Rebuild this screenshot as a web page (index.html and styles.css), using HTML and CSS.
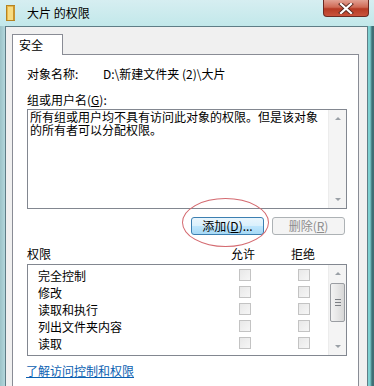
FILE: index.html
```html
<!DOCTYPE html>
<html>
  <head>
    <meta charset="UTF-8">
    <title>大片 的权限</title>
    <link rel="stylesheet" href="styles.css">
  </head>
  <body>
    <div id="window">
      <div id="titlebar">
        <svg class="folder" width="10" height="16" viewBox="0 0 10 16">
          <rect x="0.5" y="0.5" width="8" height="15" fill="#e9b94a" stroke="#b58422"/>
          <rect x="2" y="2" width="6" height="13" fill="#f7dc83"/>
          <rect x="7" y="1" width="2" height="14" fill="#c99530"/>
        </svg>
        <span class="title">大片 的权限</span>
        <div class="close">
          <svg width="16" height="11" viewBox="0 0 16 11">
            <path d="M3 1 L13 10 M13 1 L3 10" stroke="#5a2a22" stroke-width="4" stroke-linecap="square"/>
            <path d="M3 1 L13 10 M13 1 L3 10" stroke="#fff" stroke-width="2.2" stroke-linecap="square"/>
          </svg>
        </div>
      </div>
      <div id="client">
        <div class="tabs">
          <div class="tab">安全</div>
        </div>
        <div class="page">
          <div class="objrow">
            <span class="objlabel">对象名称:</span>
            <span>D:\新建文件夹 (2)\大片</span>
          </div>
          <div class="grouplabel">组或用户名(<u>G</u>):</div>
          <div class="listbox">
            <div class="listtext">所有组或用户均不具有访问此对象的权限。但是该对象<br>的所有者可以分配权限。</div>
            <div class="vscroll">
              <span class="arrow up"></span>
              <span class="track"></span>
              <span class="arrow down"></span>
            </div>
          </div>
          <div class="buttons">
            <button class="btn hot">添加(<u>D</u>)...</button>
            <button class="btn off">删除(<u>R</u>)</button>
            <div class="ring"></div>
          </div>
          <div class="permhead">
            <span class="permname">权限</span>
            <span class="colhead">允许</span>
            <span class="colhead">拒绝</span>
          </div>
          <div class="permlist">
            <div class="rows">
              <div class="row"><span class="permname">完全控制</span><span class="chk"></span><span class="chk"></span></div>
              <div class="row"><span class="permname">修改</span><span class="chk"></span><span class="chk"></span></div>
              <div class="row"><span class="permname">读取和执行</span><span class="chk"></span><span class="chk"></span></div>
              <div class="row"><span class="permname">列出文件夹内容</span><span class="chk"></span><span class="chk"></span></div>
              <div class="row"><span class="permname">读取</span><span class="chk"></span><span class="chk"></span></div>
            </div>
            <div class="vscroll">
              <span class="arrow up"></span>
              <span class="gap1"></span>
              <span class="thumb"><i></i><i></i><i></i></span>
              <span class="track"></span>
              <span class="arrow down"></span>
            </div>
          </div>
          <a class="help" href="#">了解访问控制和权限</a>
        </div>
      </div>
    </div>
  </body>
</html>
```

FILE: styles.css
```css
html,
body {
  margin: 0;
  padding: 0;
  width: 374px;
  height: 386px;
  overflow: hidden;
  font-family: "Noto Sans CJK SC", "Liberation Sans", sans-serif;
  font-size: 12px;
  color: #000;
}

#window {
  width: 374px;
  height: 386px;
  background: linear-gradient(90deg, #9cc3c8 0px, #bfe3e8 8px, #c6ecee 180px, #9fdcdc 300px, #7dd0d1 370px, #3f6f75 372px);
  display: flex;
  flex-direction: column;
}

#titlebar {
  height: 26px;
  display: flex;
  align-items: flex-start;
  background: linear-gradient(180deg, #d6eef1 0%, #c2e8ea 100%);
}

.folder {
  margin: 5px 0 0 6px;
}

.title {
  margin: 4px 0 0 11px;
  line-height: 18px;
}

.close {
  margin-left: auto;
  margin-right: 5px;
  width: 46px;
  height: 17px;
  box-sizing: border-box;
  border: 1px solid #6b2a22;
  border-top: none;
  border-radius: 0 0 4px 4px;
  background: linear-gradient(180deg, #e2a193 0%, #cf6a55 45%, #b63a24 55%, #c9543d 100%);
  display: flex;
  align-items: center;
  justify-content: center;
}

#client {
  margin-left: 5px;
  width: 363px;
  flex: 1;
  box-sizing: border-box;
  border: 1px solid #5f7d86;
  border-bottom: none;
  background: #f0f0f0;
  padding: 7px 0 0 6px;
  display: flex;
  flex-direction: column;
}

.tabs {
  display: flex;
  height: 20px;
}

.tab {
  width: 51px;
  box-sizing: border-box;
  border: 1px solid #898c95;
  border-bottom: none;
  background: #fff;
  line-height: 19px;
  padding-left: 6px;
  margin-bottom: -1px;
  position: relative;
  z-index: 1;
}

.page {
  width: 347px;
  flex: 1;
  box-sizing: border-box;
  border: 1px solid #898c95;
  border-bottom: none;
  background: #fff;
  padding: 11px 0 0 14px;
  position: relative;
}

.objrow {
  display: flex;
  line-height: 16px;
}

.objlabel {
  width: 76px;
}

.grouplabel {
  margin-top: 10px;
  line-height: 16px;
}

u {
  text-decoration: underline;
}

.listbox {
  margin-top: 1px;
  width: 320px;
  height: 100px;
  box-sizing: border-box;
  border: 1px solid #828790;
  display: flex;
}

.listtext {
  flex: 1;
  padding: 0 0 0 2px;
  line-height: 13px;
  white-space: nowrap;
}

.vscroll {
  width: 17px;
  display: flex;
  flex-direction: column;
  background: #f4f4f4;
  border-left: 1px solid #ececec;
}

.arrow {
  height: 17px;
  position: relative;
}

.arrow::after {
  content: "";
  position: absolute;
  left: 6px;
  width: 0;
  height: 0;
  border-left: 3px solid transparent;
  border-right: 3px solid transparent;
}

.arrow.up::after {
  top: 7px;
  border-bottom: 3px solid #9aa0a6;
}

.arrow.down::after {
  top: 7px;
  border-top: 3px solid #9aa0a6;
}

.track {
  flex: 1;
}

.gap1 {
  height: 1px;
}

.thumb {
  height: 39px;
  margin: 0 1px;
  box-sizing: border-box;
  border: 1px solid #9a9da2;
  border-radius: 2px;
  background: linear-gradient(90deg, #f3f3f3 0%, #e6e6e6 50%, #d7d7d7 100%);
  display: flex;
  flex-direction: column;
  align-items: center;
  justify-content: center;
  gap: 2px;
}

.thumb i {
  display: block;
  width: 6px;
  height: 1px;
  background: #7c7f84;
}

.buttons {
  margin-top: 8px;
  display: flex;
  padding-left: 164px;
  gap: 8px;
  position: relative;
}

.btn {
  width: 73px;
  height: 18px;
  box-sizing: border-box;
  font-family: "Noto Sans CJK SC", "Liberation Sans", sans-serif;
  font-size: 12px;
  line-height: 14px;
  padding: 0;
  border-radius: 3px;
}

.btn.hot {
  border: 1px solid #3c7fb1;
  background: linear-gradient(180deg, #eaf6fd 0%, #d9f0fc 50%, #bee6fd 51%, #a7d9f5 100%);
  color: #000;
}

.btn.off {
  border: 1px solid #adb2b5;
  background: #f4f4f4;
  color: #8d8d8d;
}

.ring {
  position: absolute;
  left: 155px;
  top: -19px;
  width: 87px;
  height: 49px;
  box-sizing: border-box;
  border: 1px solid #d46a70;
  border-radius: 50%;
  pointer-events: none;
}

.permhead {
  margin-top: 11px;
  display: flex;
  line-height: 16px;
  width: 320px;
}

.permhead .permname {
  width: 204px;
}

.colhead {
  width: 24px;
}

.colhead + .colhead {
  margin-left: 36px;
}

.permlist {
  margin-top: 2px;
  width: 320px;
  height: 92px;
  box-sizing: border-box;
  border: 1px solid #828790;
  display: flex;
}

.rows {
  flex: 1;
  padding: 4px 0 0 10px;
}

.row {
  height: 17px;
  display: flex;
  align-items: flex-start;
}

.row .permname {
  width: 201px;
  line-height: 14px;
}

.chk {
  width: 12px;
  height: 12px;
  box-sizing: border-box;
  border: 1px solid #c3c3c3;
  background: linear-gradient(135deg, #e8e8e8 0%, #f6f6f6 100%);
}

.chk + .chk {
  margin-left: 47px;
}

.help {
  display: inline-block;
  margin-top: 7px;
  margin-left: -1px;
  color: #0b61b2;
  text-decoration: underline;
  line-height: 16px;
}
```
